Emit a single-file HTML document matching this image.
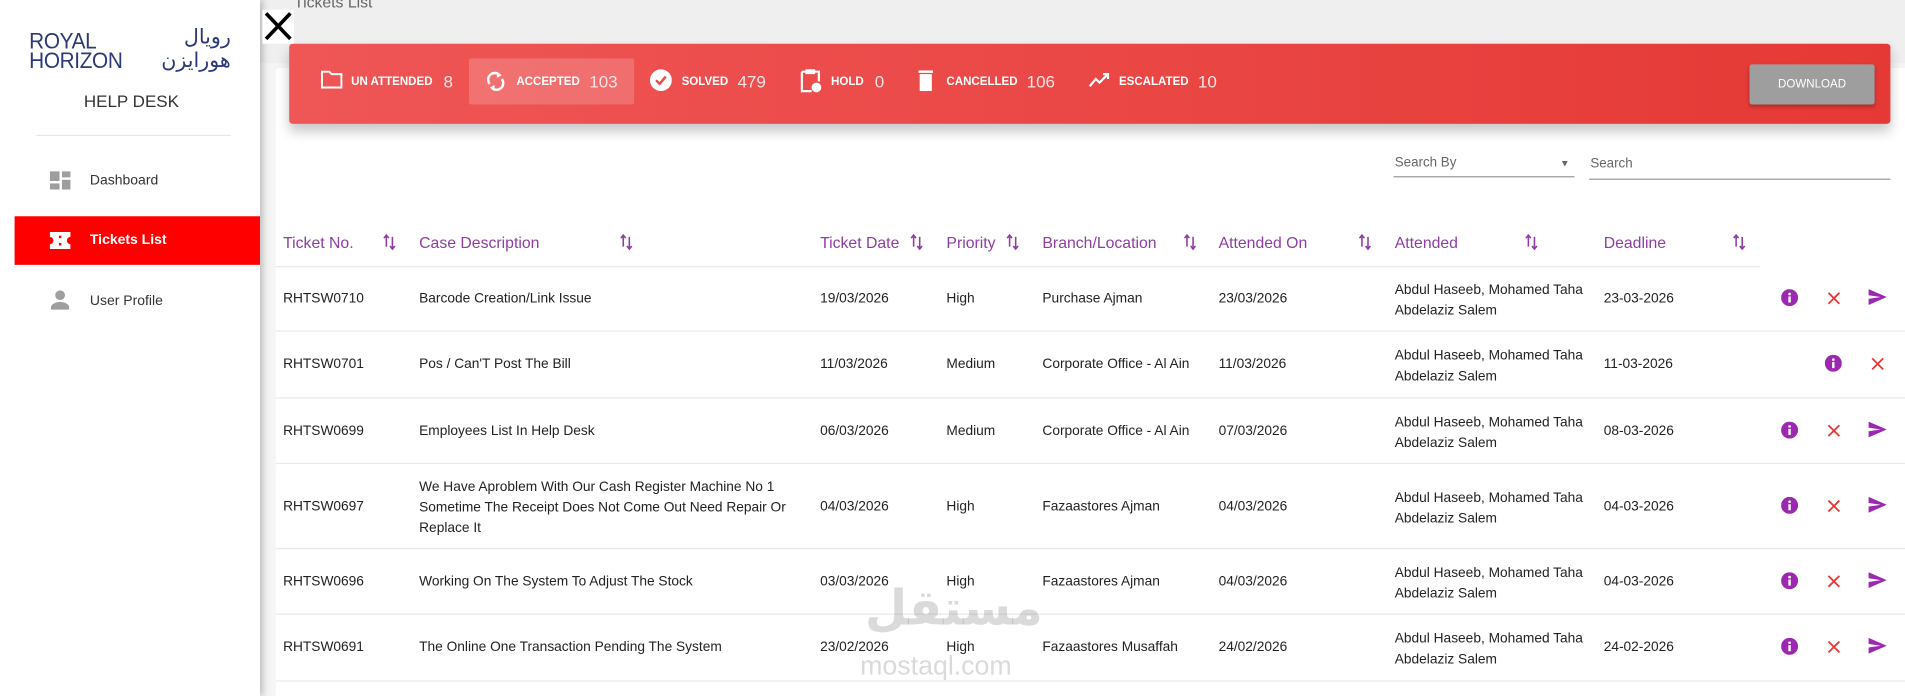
<!DOCTYPE html>
<html><head><meta charset="utf-8">
<style>
html,body{margin:0;padding:0;width:1905px;height:696px;overflow:hidden;background:#fff}
#s{position:absolute;left:0;top:0;width:1568px;height:573px;transform:scale(1.21492);transform-origin:0 0;font-family:"Liberation Sans",sans-serif;background:#efefef;overflow:hidden}
.a{position:absolute;white-space:nowrap}
.side{position:absolute;left:0;top:0;width:214px;height:573px;background:#fff;box-shadow:2px 0 6px rgba(0,0,0,.25);z-index:3}
.card{position:absolute;left:227px;top:56px;width:1341px;height:517px;background:#fff;border-radius:3px 0 0 0}
.banner{position:absolute;left:238px;top:36px;width:1318px;height:66px;background:linear-gradient(90deg,#ef5656,#e53935);border-radius:3px;box-shadow:0 6px 10px rgba(0,0,0,.22);z-index:2}
.lab{font-size:9.5px;font-weight:bold;color:#fff;top:26px}
.num{font-size:14px;color:#fde3e3;top:23px}
.th{font-size:13px;color:#8e3ea0;top:192px}
.td{font-size:11.3px;color:#222;margin-top:2px}
.ln{position:absolute;left:227px;width:1341px;height:1px;background:#e8e8e8}
.menu{font-size:11.5px;color:#333;margin-top:2px}
</style></head><body>
<div id="s">
<div class="a" style="left:242px;top:-6px;font-size:13px;color:#666">Tickets List</div>
<div class="side">
  <div class="a" style="left:24px;top:26px;font-size:18px;line-height:16px;color:#2b3a77;letter-spacing:-0.3px;transform:scaleX(0.95);transform-origin:0 0">ROYAL<br>HORIZON</div>
  <div class="a" style="left:147px;top:22px;font-size:17px;line-height:19px;color:#2b3a77;font-family:'DejaVu Sans',sans-serif;direction:rtl;text-align:right;width:43px">رويال<br>هورايزن</div>
  <div class="a" style="left:69px;top:75px;font-size:14px;color:#333">HELP DESK</div>
  <div style="position:absolute;left:30px;top:111px;width:160px;height:1px;background:#e6e6e6"></div>
  <svg class="a" style="left:41px;top:141px" width="17" height="15" viewBox="0 0 17 15"><rect x="0" y="0" width="8" height="8" fill="#9e9e9e"/><rect x="10" y="0" width="7" height="5" fill="#9e9e9e"/><rect x="0" y="10" width="8" height="5" fill="#9e9e9e"/><rect x="10" y="7" width="7" height="8" fill="#9e9e9e"/></svg>
  <div class="a menu" style="left:74px;top:141px">Dashboard</div>
  <div style="position:absolute;left:12px;top:178px;width:202px;height:40px;background:#ff0000"></div>
  <svg class="a" style="left:41px;top:191px" width="17" height="14" viewBox="0 0 17 14"><path d="M0 0h17v4a3 3 0 0 0 0 6v4H0v-4a3 3 0 0 0 0-6z" fill="#fff"/><rect x="7.5" y="3" width="2" height="2" fill="#f00"/><rect x="7.5" y="9" width="2" height="2" fill="#f00"/></svg>
  <div class="a menu" style="left:74px;top:190px;color:#fff;font-weight:bold">Tickets List</div>
  <svg class="a" style="left:42px;top:239px" width="15" height="16" viewBox="0 0 15 16"><circle cx="7.5" cy="4" r="4" fill="#9e9e9e"/><path d="M0 16v-2c0-3 5-4.5 7.5-4.5S15 11 15 14v2z" fill="#9e9e9e"/></svg>
  <div class="a menu" style="left:74px;top:240px">User Profile</div>
</div>
<div class="a" style="left:216px;top:8px;width:26px;height:28px;background:#fff;z-index:4"><svg width="26" height="28" viewBox="0 0 26 28"><path d="M3 3L23 24M23 3L3 24" stroke="#000" stroke-width="3"/></svg></div>
<div style="position:absolute;left:214px;top:52px;width:1354px;height:521px;background:#f5f5f5"></div>
<div class="card"></div>
<div class="banner">
  <svg class="a" style="left:26px;top:22px" width="18" height="15" viewBox="0 0 18 15"><path d="M1 1h6l2 2h8v11H1z" fill="none" stroke="#fff" stroke-width="1.6"/></svg>
  <div class="a lab" style="left:51px">UN ATTENDED</div><div class="a num" style="left:127px">8</div>
  <div style="position:absolute;left:148px;top:12px;width:136px;height:38px;background:rgba(255,255,255,.18);border-radius:2px"></div>
  <svg class="a" style="left:162px;top:22px" width="16" height="18" viewBox="0 0 16 18"><path d="M3 11A5.5 5.5 0 0 1 11 3.5M13 7A5.5 5.5 0 0 1 5 14.5" fill="none" stroke="#fff" stroke-width="2"/><path d="M9 1l4 3-4 2zM7 17l-4-3 4-2z" fill="#fff"/></svg>
  <div class="a lab" style="left:187px">ACCEPTED</div><div class="a num" style="left:247px">103</div>
  <svg class="a" style="left:297px;top:21px" width="18" height="18" viewBox="0 0 18 18"><circle cx="9" cy="9" r="9" fill="#fff"/><path d="M5 9l3 3 5-6" fill="none" stroke="#e94848" stroke-width="2"/></svg>
  <div class="a lab" style="left:323px">SOLVED</div><div class="a num" style="left:369px">479</div>
  <svg class="a" style="left:421px;top:20px" width="18" height="21" viewBox="0 0 18 21"><path d="M1 3h14v8M9 19H1V3" fill="none" stroke="#fff" stroke-width="1.8"/><rect x="4" y="1" width="8" height="4" fill="#fff"/><circle cx="13" cy="16" r="4" fill="#fff"/></svg>
  <div class="a lab" style="left:446px">HOLD</div><div class="a num" style="left:482px">0</div>
  <svg class="a" style="left:518px;top:21px" width="12" height="18" viewBox="0 0 12 18"><rect x="0" y="1" width="12" height="2" fill="#fff"/><rect x="1" y="4" width="10" height="14" fill="#fff"/></svg>
  <div class="a lab" style="left:541px">CANCELLED</div><div class="a num" style="left:607px">106</div>
  <svg class="a" style="left:658px;top:24px" width="18" height="12" viewBox="0 0 18 12"><path d="M1 11l5-6 3 3 6-6M12 1h4v4" fill="none" stroke="#fff" stroke-width="1.8"/></svg>
  <div class="a lab" style="left:683px">ESCALATED</div><div class="a num" style="left:748px">10</div>
  <div style="position:absolute;left:1202px;top:17px;width:103px;height:33px;background:#9e9e9e;border-radius:2px;box-shadow:0 2px 3px rgba(0,0,0,.25);color:#fff;font-size:9.5px;line-height:33px;text-align:center">DOWNLOAD</div>
</div>
<div class="a" style="left:1148px;top:128px;font-size:11px;color:#666">Search By</div>
<div class="a" style="left:1284px;top:130px;font-size:8px;color:#666">▼</div>
<div style="position:absolute;left:1147px;top:145px;width:149px;height:1px;background:#999"></div>
<div class="a" style="left:1309px;top:129px;font-size:11px;color:#666">Search</div>
<div style="position:absolute;left:1308px;top:147px;width:248px;height:1px;background:#999"></div>

<div class="a th" style="left:233px">Ticket No.</div>
<div class="a th" style="left:345px">Case Description</div>
<div class="a th" style="left:675px">Ticket Date</div>
<div class="a th" style="left:779px">Priority</div>
<div class="a th" style="left:858px">Branch/Location</div>
<div class="a th" style="left:1003px">Attended On</div>
<div class="a th" style="left:1148px">Attended</div>
<div class="a th" style="left:1320px">Deadline</div>
<svg width="0" height="0" style="position:absolute"><defs><g id="so"><path d="M3 11V2M1 4l2-2.5L5 4M8 3v9.5M6 10.5l2 2.5 2-2.5" fill="none" stroke="#8e3ea0" stroke-width="1.3"/></g><g id="inf"><circle cx="7" cy="7" r="7" fill="#9c27b0"/><rect x="6" y="6" width="2" height="5" fill="#fff"/><circle cx="7" cy="4" r="1.1" fill="#fff"/></g><g id="xx"><path d="M2 2l9 9M11 2l-9 9" stroke="#e53935" stroke-width="1.5"/></g><g id="se"><path d="M0 0l15 6.5L0 13l0-5 10-1.5L0 5z" fill="#9c27b0"/></g></defs></svg>
<svg class="a" style="left:315px;top:192px" width="11" height="14"><use href="#so"/></svg>
<svg class="a" style="left:510px;top:192px" width="11" height="14"><use href="#so"/></svg>
<svg class="a" style="left:749px;top:192px" width="11" height="14"><use href="#so"/></svg>
<svg class="a" style="left:828px;top:192px" width="11" height="14"><use href="#so"/></svg>
<svg class="a" style="left:974px;top:192px" width="11" height="14"><use href="#so"/></svg>
<svg class="a" style="left:1118px;top:192px" width="11" height="14"><use href="#so"/></svg>
<svg class="a" style="left:1255px;top:192px" width="11" height="14"><use href="#so"/></svg>
<svg class="a" style="left:1426px;top:192px" width="11" height="14"><use href="#so"/></svg>
<div style="position:absolute;left:227px;top:219px;width:1222px;height:1px;background:#e8e8e8"></div>
<div class="ln" style="top:272px"></div><div class="ln" style="top:327px"></div><div class="ln" style="top:381px"></div><div class="ln" style="top:451px"></div><div class="ln" style="top:505px"></div><div class="ln" style="top:560px"></div>

<div class="a td" style="left:233px;top:238px">RHTSW0710</div><div class="a td" style="left:345px;top:238px">Barcode Creation/Link Issue</div><div class="a td" style="left:675px;top:238px">19/03/2026</div><div class="a td" style="left:779px;top:238px">High</div><div class="a td" style="left:858px;top:238px">Purchase Ajman</div><div class="a td" style="left:1003px;top:238px">23/03/2026</div><div class="a td" style="left:1148px;top:229px;line-height:17px">Abdul Haseeb, Mohamed Taha<br>Abdelaziz Salem</div><div class="a td" style="left:1320px;top:238px">23-03-2026</div>
<svg class="a" style="left:1466px;top:238px" width="14" height="14"><use href="#inf"/></svg><svg class="a" style="left:1503px;top:239px" width="13" height="13"><use href="#xx"/></svg><svg class="a" style="left:1538px;top:238px" width="15" height="13"><use href="#se"/></svg>

<div class="a td" style="left:233px;top:292px">RHTSW0701</div><div class="a td" style="left:345px;top:292px">Pos / Can'T Post The Bill</div><div class="a td" style="left:675px;top:292px">11/03/2026</div><div class="a td" style="left:779px;top:292px">Medium</div><div class="a td" style="left:858px;top:292px">Corporate Office - Al Ain</div><div class="a td" style="left:1003px;top:292px">11/03/2026</div><div class="a td" style="left:1148px;top:283px;line-height:17px">Abdul Haseeb, Mohamed Taha<br>Abdelaziz Salem</div><div class="a td" style="left:1320px;top:292px">11-03-2026</div>
<svg class="a" style="left:1502px;top:292px" width="14" height="14"><use href="#inf"/></svg><svg class="a" style="left:1539px;top:293px" width="13" height="13"><use href="#xx"/></svg>

<div class="a td" style="left:233px;top:347px">RHTSW0699</div><div class="a td" style="left:345px;top:347px">Employees List In Help Desk</div><div class="a td" style="left:675px;top:347px">06/03/2026</div><div class="a td" style="left:779px;top:347px">Medium</div><div class="a td" style="left:858px;top:347px">Corporate Office - Al Ain</div><div class="a td" style="left:1003px;top:347px">07/03/2026</div><div class="a td" style="left:1148px;top:338px;line-height:17px">Abdul Haseeb, Mohamed Taha<br>Abdelaziz Salem</div><div class="a td" style="left:1320px;top:347px">08-03-2026</div>
<svg class="a" style="left:1466px;top:347px" width="14" height="14"><use href="#inf"/></svg><svg class="a" style="left:1503px;top:348px" width="13" height="13"><use href="#xx"/></svg><svg class="a" style="left:1538px;top:347px" width="15" height="13"><use href="#se"/></svg>

<div class="a td" style="left:233px;top:409px">RHTSW0697</div><div class="a td" style="left:345px;top:391px;line-height:17px">We Have Aproblem With Our Cash Register Machine No 1<br>Sometime The Receipt Does Not Come Out Need Repair Or<br>Replace It</div><div class="a td" style="left:675px;top:409px">04/03/2026</div><div class="a td" style="left:779px;top:409px">High</div><div class="a td" style="left:858px;top:409px">Fazaastores Ajman</div><div class="a td" style="left:1003px;top:409px">04/03/2026</div><div class="a td" style="left:1148px;top:400px;line-height:17px">Abdul Haseeb, Mohamed Taha<br>Abdelaziz Salem</div><div class="a td" style="left:1320px;top:409px">04-03-2026</div>
<svg class="a" style="left:1466px;top:409px" width="14" height="14"><use href="#inf"/></svg><svg class="a" style="left:1503px;top:410px" width="13" height="13"><use href="#xx"/></svg><svg class="a" style="left:1538px;top:409px" width="15" height="13"><use href="#se"/></svg>

<div class="a td" style="left:233px;top:471px">RHTSW0696</div><div class="a td" style="left:345px;top:471px">Working On The System To Adjust The Stock</div><div class="a td" style="left:675px;top:471px">03/03/2026</div><div class="a td" style="left:779px;top:471px">High</div><div class="a td" style="left:858px;top:471px">Fazaastores Ajman</div><div class="a td" style="left:1003px;top:471px">04/03/2026</div><div class="a td" style="left:1148px;top:462px;line-height:17px">Abdul Haseeb, Mohamed Taha<br>Abdelaziz Salem</div><div class="a td" style="left:1320px;top:471px">04-03-2026</div>
<svg class="a" style="left:1466px;top:471px" width="14" height="14"><use href="#inf"/></svg><svg class="a" style="left:1503px;top:472px" width="13" height="13"><use href="#xx"/></svg><svg class="a" style="left:1538px;top:471px" width="15" height="13"><use href="#se"/></svg>

<div class="a td" style="left:233px;top:525px">RHTSW0691</div><div class="a td" style="left:345px;top:525px">The Online One Transaction Pending The System</div><div class="a td" style="left:675px;top:525px">23/02/2026</div><div class="a td" style="left:779px;top:525px">High</div><div class="a td" style="left:858px;top:525px">Fazaastores Musaffah</div><div class="a td" style="left:1003px;top:525px">24/02/2026</div><div class="a td" style="left:1148px;top:516px;line-height:17px">Abdul Haseeb, Mohamed Taha<br>Abdelaziz Salem</div><div class="a td" style="left:1320px;top:525px">24-02-2026</div>
<svg class="a" style="left:1466px;top:525px" width="14" height="14"><use href="#inf"/></svg><svg class="a" style="left:1503px;top:526px" width="13" height="13"><use href="#xx"/></svg><svg class="a" style="left:1538px;top:525px" width="15" height="13"><use href="#se"/></svg>

<div class="a" style="left:712px;top:478px;font-size:40px;color:rgba(150,150,150,.35);font-family:'DejaVu Sans',sans-serif;font-weight:bold">مستقل</div>
<div class="a" style="left:708px;top:535px;font-size:22px;color:rgba(150,150,150,.35)">mostaql.com</div>
</div>
</body></html>
